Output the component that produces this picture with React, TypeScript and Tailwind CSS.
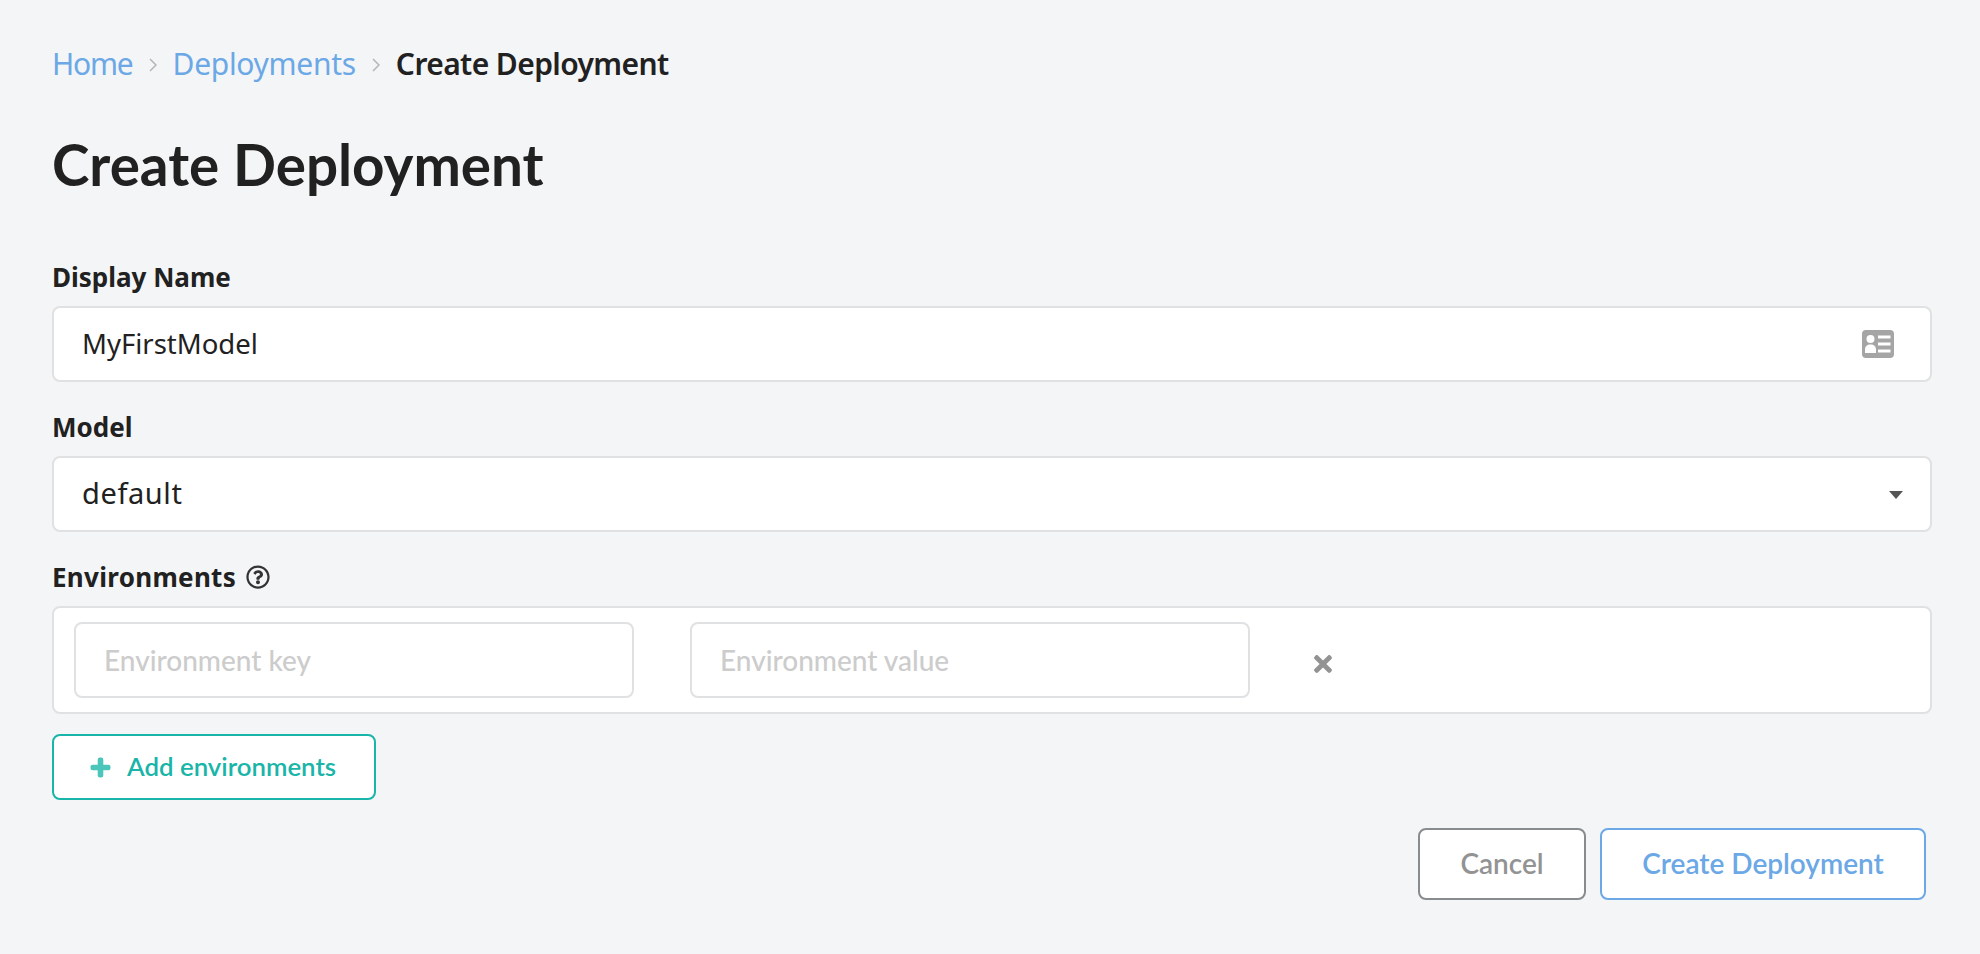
import React from 'react';
import { FaPlus, FaRegQuestionCircle, FaTimes } from 'react-icons/fa';

const notoFont = "font-['Noto_Sans',sans-serif]";
const latoFont = "font-['Lato',sans-serif]";

const Label = ({ children, className = '' }: { children: React.ReactNode; className?: string }) => (
  <label className={`${notoFont} block text-[26px] leading-[30px] font-bold text-[#212121] ${className}`}>
    {children}
  </label>
);

const Chevron = () => (
  <svg viewBox="0 0 8 16" className="mx-[16px] mt-[4px] w-[8px] h-[16px]" fill="none" stroke="#b5b5b5" strokeWidth="1.5">
    <path d="M1 2l6 6-6 6" />
  </svg>
);

const CardIcon = () => (
  <svg viewBox="0 0 32 28" className="w-[32px] h-[28px]">
    <rect width="32" height="28" rx="4" fill="#a5a5a5" />
    <circle cx="8.5" cy="9" r="4" fill="#ffffff" />
    <path d="M3 23v-3.5c0-3 2-5 5.500-5s5.500 2 5.500 5V23z" fill="#ffffff" />
    <path d="M16 5.500h12.500v3H16zM16 12.500h12.500v3H16zM16 19.500h12.500v3H16z" fill="#ffffff" />
  </svg>
);

const App = () => {
  return (
    <div className="min-h-[954px] bg-[#f4f5f7] pl-[52px] pr-[48px] pt-[44px]">
      <nav className={`${notoFont} flex items-center h-[38px] text-[30px]`}>
        <a className="text-[#6ba8e5] tracking-[-1.2px]">Home</a>
        <Chevron />
        <a className="text-[#6ba8e5] tracking-[-0.3px]">Deployments</a>
        <Chevron />
        <span className="font-semibold text-[#212121] tracking-[-0.6px]">Create Deployment</span>
      </nav>

      <h1 className={`${latoFont} mt-[48px] text-[56.6px] leading-[68px] font-bold text-[#212121]`}>
        Create Deployment
      </h1>

      <div className="mt-[64px]">
        <Label>Display Name</Label>
        <div className="mt-[14px] h-[76px] flex items-center justify-between rounded-[8px] border-2 border-[#e0e1e2] bg-white pl-[28px] pr-[36px]">
          <input
            readOnly
            value="MyFirstModel"
            className={`${notoFont} flex-1 outline-none text-[27.5px] text-[#212121]`}
          />
          <CardIcon />
        </div>
      </div>

      <div className="mt-[30px]">
        <Label>Model</Label>
        <div className="mt-[14px] h-[76px] flex items-center justify-between rounded-[8px] border-2 border-[#e0e1e2] bg-white pl-[28px] pr-[27px]">
          <span className={`${notoFont} text-[29px] tracking-[0.6px] text-[#212121] pb-[2px]`}>default</span>
          <svg viewBox="0 0 14 8" className="w-[14px] h-[8px] mt-[2px]">
            <path d="M0 0h14L7 8z" fill="#555555" />
          </svg>
        </div>
      </div>

      <div className="mt-[30px]">
        <div className="flex items-center gap-[10px]">
          <Label className="tracking-[0.3px]">Environments</Label>
          <FaRegQuestionCircle className="text-[24px] text-[#333333]" />
        </div>
        <div className="mt-[14px] h-[108px] flex items-center rounded-[8px] border-2 border-[#e0e1e2] bg-white pl-[20px]">
          <input
            readOnly
            placeholder="Environment key"
            className={`${latoFont} w-[560px] h-[76px] rounded-[8px] border-2 border-[#e0e1e2] px-[28px] text-[28px] font-medium outline-none placeholder:text-[#cccccc]`}
          />
          <input
            readOnly
            placeholder="Environment value"
            className={`${latoFont} ml-[56px] w-[560px] h-[76px] rounded-[8px] border-2 border-[#e0e1e2] px-[28px] text-[28px] font-medium outline-none placeholder:text-[#cccccc]`}
          />
          <FaTimes className="ml-[60px] mt-[7px] text-[26px] text-[#939393]" />
        </div>
      </div>

      <button className={`${latoFont} mt-[20px] h-[66px] w-[324px] flex items-center rounded-[8px] border-2 border-[#19b5a8] bg-white pl-[36px] pb-[2px] text-[25.8px] font-semibold text-[#19b5a8]`}>
        <FaPlus className="mr-[16px] mt-[2px] text-[21px] text-[#4cc5bb] stroke-[40px] stroke-[#4cc5bb]" />
        Add environments
      </button>

      <div className="mt-[28px] flex justify-end gap-[14px] pr-[6px]">
        <button className={`${latoFont} h-[72px] w-[168px] rounded-[8px] border-2 border-[#888c8e] bg-white pb-[2px] text-[28px] font-semibold text-[#939393]`}>
          Cancel
        </button>
        <button className={`${latoFont} h-[72px] w-[326px] rounded-[8px] border-2 border-[#6ba8e5] bg-white pb-[2px] text-[28px] font-semibold text-[#6ba8e5]`}>
          Create Deployment
        </button>
      </div>
    </div>
  );
};

export default App;
